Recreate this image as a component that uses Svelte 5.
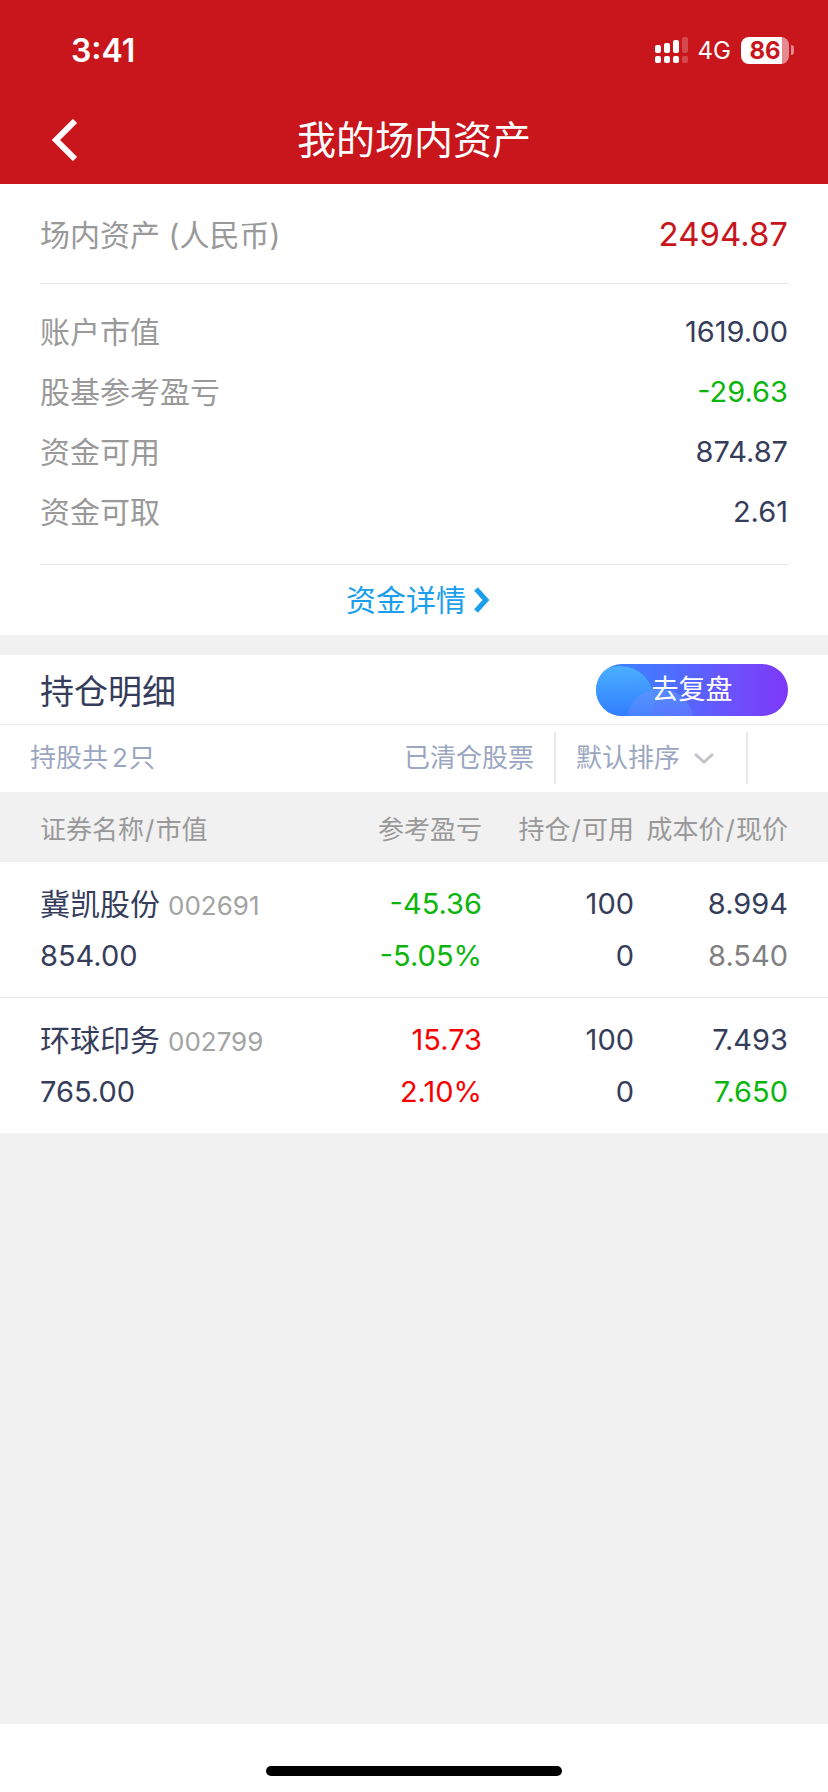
<script>
	let sort = $state('default');

	const total = '2494.87';

	const summary = [
		{ label: '账户市值', value: '1619.00' },
		{ label: '股基参考盈亏', value: '-29.63', tone: 'down' },
		{ label: '资金可用', value: '874.87' },
		{ label: '资金可取', value: '2.61' }
	];

	const holdings = [
		{
			name: '冀凯股份',
			code: '002691',
			marketValue: '854.00',
			profit: '-45.36',
			profitRate: '-5.05%',
			profitTone: 'down',
			amount: 100,
			available: 0,
			cost: '8.994',
			price: '8.540',
			priceTone: 'flat'
		},
		{
			name: '环球印务',
			code: '002799',
			marketValue: '765.00',
			profit: '15.73',
			profitRate: '2.10%',
			profitTone: 'up',
			amount: 100,
			available: 0,
			cost: '7.493',
			price: '7.650',
			priceTone: 'down'
		}
	];
</script>

<div class="page">
	<header class="top">
		<div class="status-bar">
			<span class="time">3:41</span>
			<div class="status-icons">
				<svg class="signal" width="33" height="26" viewBox="0 0 33 26" fill="#fff" aria-hidden="true">
					<rect x="0" y="8" width="6" height="8" rx="2" />
					<rect x="9" y="6" width="6" height="10" rx="2" />
					<rect x="18" y="3" width="6" height="13" rx="2" />
					<rect x="27" y="0" width="6" height="16" rx="2" opacity="0.22" />
					<rect x="0" y="19" width="6" height="7" rx="2" />
					<rect x="9" y="19" width="6" height="7" rx="2" />
					<rect x="18" y="19" width="6" height="7" rx="2" />
					<rect x="27" y="19" width="6" height="7" rx="2" opacity="0.22" />
				</svg>
				<span class="network">4G</span>
				<div class="battery">
					<span class="battery-body">86</span>
					<span class="battery-cap"></span>
				</div>
			</div>
		</div>
		<div class="nav">
			<button class="back" aria-label="返回">
				<svg width="26" height="42" viewBox="0 0 26 42" fill="none" stroke="#fff" stroke-width="6">
					<path d="M23 2L4 21L23 40" />
				</svg>
			</button>
			<h1>我的场内资产</h1>
		</div>
	</header>

	<section class="assets">
		<div class="total">
			<span class="label">场内资产 (人民币)</span>
			<span class="total-value">{total}</span>
		</div>
		<dl class="summary">
			{#each summary as item}
				<div class="summary-row">
					<dt>{item.label}</dt>
					<dd class={item.tone}>{item.value}</dd>
				</div>
			{/each}
		</dl>
		<a class="detail-link" href="#detail">
			资金详情
			<svg width="16" height="26" viewBox="0 0 16 26" fill="none" stroke="currentColor" stroke-width="5">
				<path d="M2 2L12 13L2 24" />
			</svg>
		</a>
	</section>

	<section class="positions">
		<div class="positions-head">
			<h2>持仓明细</h2>
			<button class="review">
				<!-- Decorative bubbles behind the label -->
				<svg viewBox="0 0 192 52" width="192" height="52" aria-hidden="true">
					<defs>
						<linearGradient id="bubble-a" x1="0" y1="0" x2="0" y2="1">
							<stop offset="0" stop-color="#4cb8ff" />
							<stop offset="0.75" stop-color="#2f7dff" />
						</linearGradient>
						<linearGradient id="bubble-b" x1="0" y1="0" x2="0" y2="1">
							<stop offset="0" stop-color="#5b95ff" stop-opacity="0.8" />
							<stop offset="0.5" stop-color="#6680ff" stop-opacity="0.35" />
						</linearGradient>
					</defs>
					<circle cx="24" cy="36" r="34" fill="url(#bubble-a)" opacity="0.85" />
					<circle cx="64" cy="59" r="34" fill="url(#bubble-b)" />
				</svg>
				<span>去复盘</span>
			</button>
		</div>

		<div class="filters">
			<span class="count">持股共<span class="count-number">2</span>只</span>
			<button class="cleared">已清仓股票</button>
			<div class="sort">
				<select aria-label="排序方式" bind:value={sort}>
					<option value="default">默认排序</option>
					<option value="value">市值排序</option>
					<option value="profit">盈亏排序</option>
				</select>
				<svg width="20" height="12" viewBox="0 0 20 12" fill="none" stroke="#c3c4cb" stroke-width="3" aria-hidden="true">
					<path d="M1 2L10 10L19 2" />
				</svg>
			</div>
		</div>

		<table>
			<thead>
				<tr>
					<th class="col-name">证券名称<span class="slash">/</span>市值</th>
					<th class="col-profit">参考盈亏</th>
					<th class="col-amount">持仓<span class="slash">/</span>可用</th>
					<th class="col-price">成本价<span class="slash">/</span>现价</th>
				</tr>
			</thead>
			<tbody>
				{#each holdings as stock}
					<tr>
						<td class="col-name">
							<span class="line"><span class="name">{stock.name}</span><span class="code">{stock.code}</span></span>
							<span class="line">{stock.marketValue}</span>
						</td>
						<td class={stock.profitTone}>
							<span class="line">{stock.profit}</span>
							<span class="line">{stock.profitRate}</span>
						</td>
						<td>
							<span class="line">{stock.amount}</span>
							<span class="line">{stock.available}</span>
						</td>
						<td class="col-price">
							<span class="line">{stock.cost}</span>
							<span class="line {stock.priceTone}">{stock.price}</span>
						</td>
					</tr>
				{/each}
			</tbody>
		</table>
	</section>

	<footer class="home-bar">
		<div class="home-indicator"></div>
	</footer>
</div>

<style>
	:global(body) {
		margin: 0;
		background: #f1f1f1;
	}

	.page {
		display: flex;
		flex-direction: column;
		min-height: 100vh;
		font-family: Inter, 'Noto Sans CJK SC', sans-serif;
		font-size: 30px;
		font-weight: 400;
		color: #363d5b;
	}

	button,
	select {
		margin: 0;
		padding: 0;
		border: none;
		background: none;
		font: inherit;
		color: inherit;
		cursor: pointer;
	}

	h1,
	h2,
	dl,
	dd {
		margin: 0;
		font-weight: 400;
	}

	/* Header */
	.top {
		background: #c8161c;
		color: #fff;
	}

	.status-bar {
		display: flex;
		align-items: center;
		justify-content: space-between;
		box-sizing: border-box;
		height: 96px;
		padding: 4px 34px 0 71px;
	}

	.time {
		font-size: 32px;
		font-weight: 600;
	}

	.status-icons {
		display: flex;
		align-items: center;
	}

	.network {
		margin: 0 10px;
		font-size: 24px;
		font-weight: 400;
	}

	.battery {
		display: flex;
		align-items: center;
		gap: 2px;
	}

	.battery-body {
		width: 48px;
		border-radius: 8px;
		background: linear-gradient(to right, #fff 41px, #e48a8e 41px);
		color: #c8161c;
		font-size: 24px;
		font-weight: 700;
		line-height: 27px;
		text-align: center;
	}

	.battery-cap {
		width: 3px;
		height: 10px;
		border-radius: 0 4px 4px 0;
		background: #e48a8e;
	}

	.nav {
		display: grid;
		grid-template-columns: 104px 1fr 104px;
		align-items: center;
		height: 88px;
	}

	.back {
		display: flex;
		padding-left: 52px;
	}

	h1 {
		padding-bottom: 6px;
		font-size: 39px;
		text-align: center;
	}

	/* Assets summary */
	.assets {
		padding: 0 40px;
		background: #fff;
	}

	.total {
		display: flex;
		align-items: center;
		justify-content: space-between;
		height: 99px;
		border-bottom: 1px solid #e6e6e6;
	}

	.label {
		padding-bottom: 2px;
	}

	.label,
	dt {
		color: #999;
	}

	.total-value {
		font-size: 33px;
		color: #c8161c;
	}

	.summary {
		padding: 18px 0 22px;
		border-bottom: 1px solid #e6e6e6;
	}

	.summary-row {
		display: flex;
		justify-content: space-between;
		line-height: 60px;
	}

	dd {
		font-size: 29px;
	}

	.detail-link {
		display: flex;
		align-items: center;
		justify-content: center;
		gap: 8px;
		height: 70px;
		padding-left: 8px;
		color: #1b9fec;
		text-decoration: none;
		line-height: 60px;
	}

	/* Positions */
	.positions {
		margin-top: 20px;
		background: #fff;
	}

	.positions-head {
		display: flex;
		align-items: center;
		justify-content: space-between;
		height: 69px;
		padding: 0 40px;
		border-bottom: 1px solid #e6ebf2;
	}

	h2 {
		font-size: 34px;
	}

	.review {
		position: relative;
		width: 192px;
		height: 52px;
		border-radius: 26px;
		overflow: hidden;
		background: linear-gradient(to right, #3a86ff, #4a72ff 35%, #6a52fb 70%, #7d38f8);
		color: #fff;
		font-size: 27px;
		line-height: 50px;
	}

	.review svg {
		position: absolute;
		top: 0;
		left: 0;
	}

	.review span {
		position: relative;
	}

	.filters {
		display: flex;
		align-items: center;
		height: 66px;
		padding: 0 80px 1px 30px;
		font-size: 26px;
		line-height: 52px;
		color: #9ba6c0;
	}

	.count {
		flex: 1;
	}

	.count-number {
		margin: 0 1px 0 4px;
	}

	.cleared {
		margin-right: 20px;
	}

	.sort {
		display: grid;
		align-items: center;
		box-sizing: border-box;
		width: 194px;
		height: 52px;
		border: solid #e6ebf2;
		border-width: 0 2px;
	}

	.sort select,
	.sort svg {
		grid-area: 1 / 1;
	}

	.sort select {
		height: 52px;
		padding: 0 50px 0 20px;
		appearance: none;
		outline: none;
	}

	.sort svg {
		justify-self: end;
		margin-right: 32px;
		pointer-events: none;
	}

	table {
		width: 100%;
		table-layout: fixed;
		border-collapse: collapse;
	}

	th {
		height: 70px;
		padding: 0;
		background: #f1f1f1;
		color: #999;
		font-size: 26px;
		font-weight: 400;
		text-align: right;
		white-space: nowrap;
	}

	.slash {
		margin: 0 1px;
	}

	td {
		padding: 16px 0 15px;
		font-size: 29px;
		text-align: right;
	}

	tbody tr + tr td {
		border-top: 1px solid #e9e9e9;
	}

	.col-name {
		padding-left: 40px;
		text-align: left;
	}

	.col-profit,
	.col-amount {
		width: 152px;
	}

	.col-price {
		width: 154px;
		padding-right: 40px;
	}

	.line {
		display: block;
		height: 52px;
		line-height: 52px;
		white-space: nowrap;
	}

	.name {
		font-size: 30px;
	}

	.code {
		margin-left: 8px;
		font-size: 26px;
		color: #a3a3a3;
	}

	.up {
		color: #f80000;
	}

	.down {
		color: #0cb50c;
	}

	.flat {
		color: #808080;
	}

	/* Home indicator */
	.home-bar {
		display: flex;
		align-items: flex-end;
		justify-content: center;
		box-sizing: border-box;
		height: 68px;
		margin-top: auto;
		padding-bottom: 16px;
		background: #fff;
	}

	.home-indicator {
		width: 296px;
		height: 10px;
		border-radius: 5px;
		background: #000;
	}
</style>
